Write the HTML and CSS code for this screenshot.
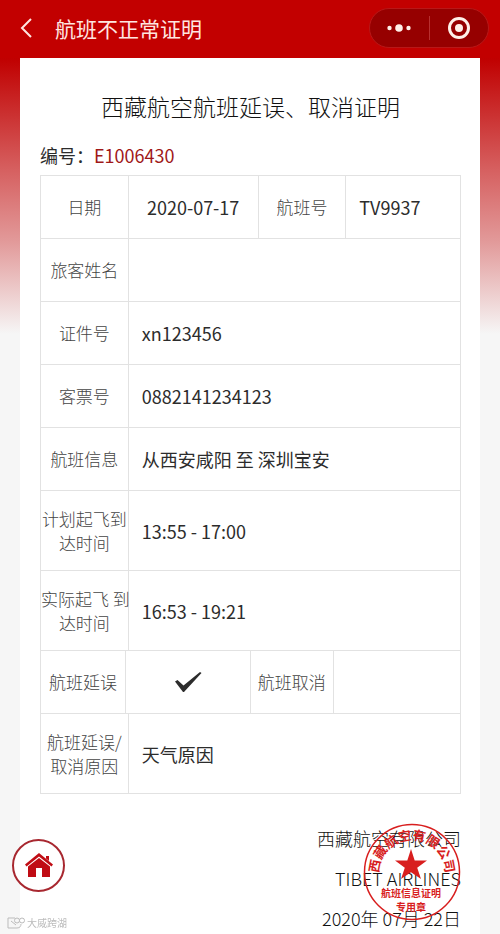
FILE: index.html
```html
<!DOCTYPE html>
<html lang="zh-CN">
<head>
<meta charset="utf-8">
<meta name="viewport" content="width=device-width, initial-scale=1">
<title>航班不正常证明</title>
<link rel="stylesheet" href="styles.css">
</head>
<body>
<header class="navbar">
  <button class="back" type="button" aria-label="返回">
    <svg width="12" height="20" viewBox="0 0 12 20"><path d="M11 1 2 10l9 9" fill="none" stroke="currentColor" stroke-width="2"/></svg>
  </button>
  <h1 class="navbar-title">航班不正常证明</h1>
  <div class="capsule">
    <button class="capsule-button" type="button" aria-label="更多">
      <svg width="26" height="10" viewBox="0 0 26 10" fill="currentColor"><circle cx="3.500" cy="5" r="2.200"/><circle cx="13" cy="5" r="3.800"/><circle cx="22.500" cy="5" r="2.200"/></svg>
    </button>
    <button class="capsule-button" type="button" aria-label="关闭">
      <svg width="24" height="24" viewBox="0 0 24 24"><circle cx="12" cy="12" r="9.500" fill="none" stroke="currentColor" stroke-width="3"/><circle cx="12" cy="12" r="4" fill="currentColor"/></svg>
    </button>
  </div>
</header>
<main class="card">
  <h2 class="title">西藏航空航班延误、取消证明</h2>
  <p class="serial">编号：<span class="serial-number">E1006430</span></p>
  <table class="details">
    <colgroup>
      <col class="c1"><col class="c2"><col class="c3"><col class="c4"><col class="c5"><col class="c6"><col class="c7">
    </colgroup>
    <tbody>
      <tr><th colspan="2" scope="row">日期</th><td class="center" colspan="2">2020-07-17</td><th colspan="2" scope="row">航班号</th><td>TV9937</td></tr>
      <tr><th colspan="2" scope="row">旅客姓名</th><td colspan="5"></td></tr>
      <tr><th colspan="2" scope="row">证件号</th><td colspan="5">xn123456</td></tr>
      <tr><th colspan="2" scope="row">客票号</th><td colspan="5">0882141234123</td></tr>
      <tr><th colspan="2" scope="row">航班信息</th><td colspan="5">从西安咸阳 至 深圳宝安</td></tr>
      <tr class="tall"><th colspan="2" scope="row">计划起飞到<br>达时间</th><td colspan="5">13:55 - 17:00</td></tr>
      <tr class="tall"><th colspan="2" scope="row">实际起飞 到<br>达时间</th><td colspan="5">16:53 - 19:21</td></tr>
      <tr><th scope="row">航班延误</th><td class="center" colspan="2"><svg class="check" width="28" height="22" viewBox="0 0 28 22" role="img" aria-label="是"><path d="M1 10.500 3.500 9 9.500 14.500 26 1 27.500 2 10 21H9Z" fill="currentColor"/></svg></td><th colspan="2" scope="row">航班取消</th><td colspan="2"></td></tr>
      <tr class="tall"><th colspan="2" scope="row">航班延误/<br>取消原因</th><td colspan="5">天气原因</td></tr>
    </tbody>
  </table>
  <footer class="signature">
    <p>西藏航空有限公司</p>
    <p>TIBET AIRLINES</p>
    <p>2020年 07月 22日</p>
    <svg class="stamp" width="98" height="98" viewBox="0 0 98 98">
      <defs><path id="arc" d="M16 50A33 33 0 0 1 82 50"/></defs>
      <circle cx="49" cy="49" r="47.500" fill="none" stroke="currentColor" stroke-width="1.500"/>
      <text class="stamp-ring"><textPath href="#arc" startOffset="50%">西藏航空有限公司</textPath></text>
      <path d="M48 26 51.700 37.500H64L54.200 44.800 58 56 48 49.200 38 56 41.800 44.800 32 37.500H44.300Z" fill="currentColor"/>
      <text class="stamp-line" x="48" y="74">航班信息证明</text>
      <text class="stamp-line" x="48" y="88">专用章</text>
    </svg>
  </footer>
</main>
<a class="home" href="#" aria-label="首页">
  <svg width="28" height="25" viewBox="0 0 28 25" fill="currentColor"><path d="M14 0 28 11.500 26.500 13.500 14 3.500 1.500 13.500 0 11.500Z"/><path d="M21 3H24V8L21 5.500Z"/><path d="M14 5 25 13.500V24H17V15H11V24H3V13.500Z"/></svg>
</a>
<div class="watermark">
  <svg width="18" height="12" viewBox="0 0 18 12" fill="none" stroke="currentColor"><path d="M8 1H1v10h9c3 0 4-2 4-4M4 4l5 4"/><circle cx="10" cy="3.500" r="2.500"/><circle cx="15" cy="3.500" r="2.500"/></svg>
  <span>大威跨湖</span>
</div>
</body>
</html>
```
FILE: styles.css
```css
* {
  box-sizing: border-box;
}

body {
  margin: 0;
  min-height: 100vh;
  display: flex;
  flex-direction: column;
  font-family: "Noto Sans CJK SC", "Noto Sans", sans-serif;
  font-size: 18px;
  color: #2c2c2c;
  background: #f6f6f6 linear-gradient(#c00000 58px, #d66060 170px, #e29a9a 242px, #f6f6f6 334px) no-repeat;
}

h1, h2, p {
  margin: 0;
  font-weight: 400;
}

button {
  display: flex;
  align-items: center;
  justify-content: center;
  padding: 0;
  border: 0;
  background: none;
  color: inherit;
}

.navbar {
  display: flex;
  align-items: center;
  height: 58px;
  padding: 0 11px 2px 20px;
  background: #c20000;
  color: #ffe6e0;
}

.back {
  width: 12px;
  height: 40px;
}

.navbar-title {
  flex: 1;
  margin-left: 23px;
  font-size: 21px;
  line-height: 30px;
}

.capsule {
  display: flex;
  align-items: center;
  width: 120px;
  height: 40px;
  border: 1px solid #b81818;
  border-radius: 20px;
  background: #960000;
  color: #fff0e8;
}

.capsule-button {
  flex: 1;
  height: 24px;
}

.capsule-button + .capsule-button {
  border-left: 1px solid #b83030;
}

.card {
  flex: 1;
  margin: 0 20px;
  padding: 30px 19px 0 20px;
  background: #fff;
}

.title {
  font-size: 23px;
  line-height: 36px;
  font-weight: 300;
  color: #111;
  text-align: center;
}

.serial {
  margin-top: 17px;
  line-height: 28px;
}

.serial-number {
  color: #a01818;
}

.details {
  width: 100%;
  margin-top: 6px;
  table-layout: fixed;
  border-collapse: collapse;
}

.c1 { width: 20.2%; }
.c2 { width: 0.7%; }
.c3 { width: 29%; }
.c4 { width: 1.9%; }
.c5 { width: 18%; }
.c6 { width: 2.9%; }
.c7 { width: 27.3%; }

.details tr {
  height: 63px;
}

.details .tall {
  height: 80px;
}

.details th,
.details td {
  padding: 0;
  border: 1px solid #e2e2e2;
}

.details th {
  font-size: 17px;
  line-height: 24px;
  font-weight: 300;
  color: #444;
  text-align: center;
  white-space: nowrap;
}

.details td {
  padding-left: 13px;
  line-height: 26px;
}

.details .center {
  padding: 0;
  text-align: center;
}

.check {
  display: block;
  margin: 0 auto;
}

.signature {
  position: relative;
  margin-top: 24px;
  line-height: 40px;
  font-weight: 300;
  color: #111;
  text-align: right;
}

.signature p {
  font-weight: 300;
}

.stamp {
  position: absolute;
  top: 5px;
  right: 0;
  color: #d81e1e;
}

.stamp text {
  fill: currentColor;
  font-weight: 700;
  text-anchor: middle;
}

.stamp-ring {
  font-size: 13px;
}

.stamp-line {
  font-size: 10px;
}

.home {
  position: fixed;
  left: 12px;
  bottom: 42px;
  display: flex;
  align-items: center;
  justify-content: center;
  width: 53px;
  height: 53px;
  border: 2px solid #a82830;
  border-radius: 50%;
  background: #fff;
  color: #c00c14;
}

.watermark {
  position: fixed;
  left: 7px;
  bottom: 4px;
  display: flex;
  align-items: center;
  gap: 2px;
  font-size: 10px;
  line-height: 14px;
  color: #bbb;
}
```
